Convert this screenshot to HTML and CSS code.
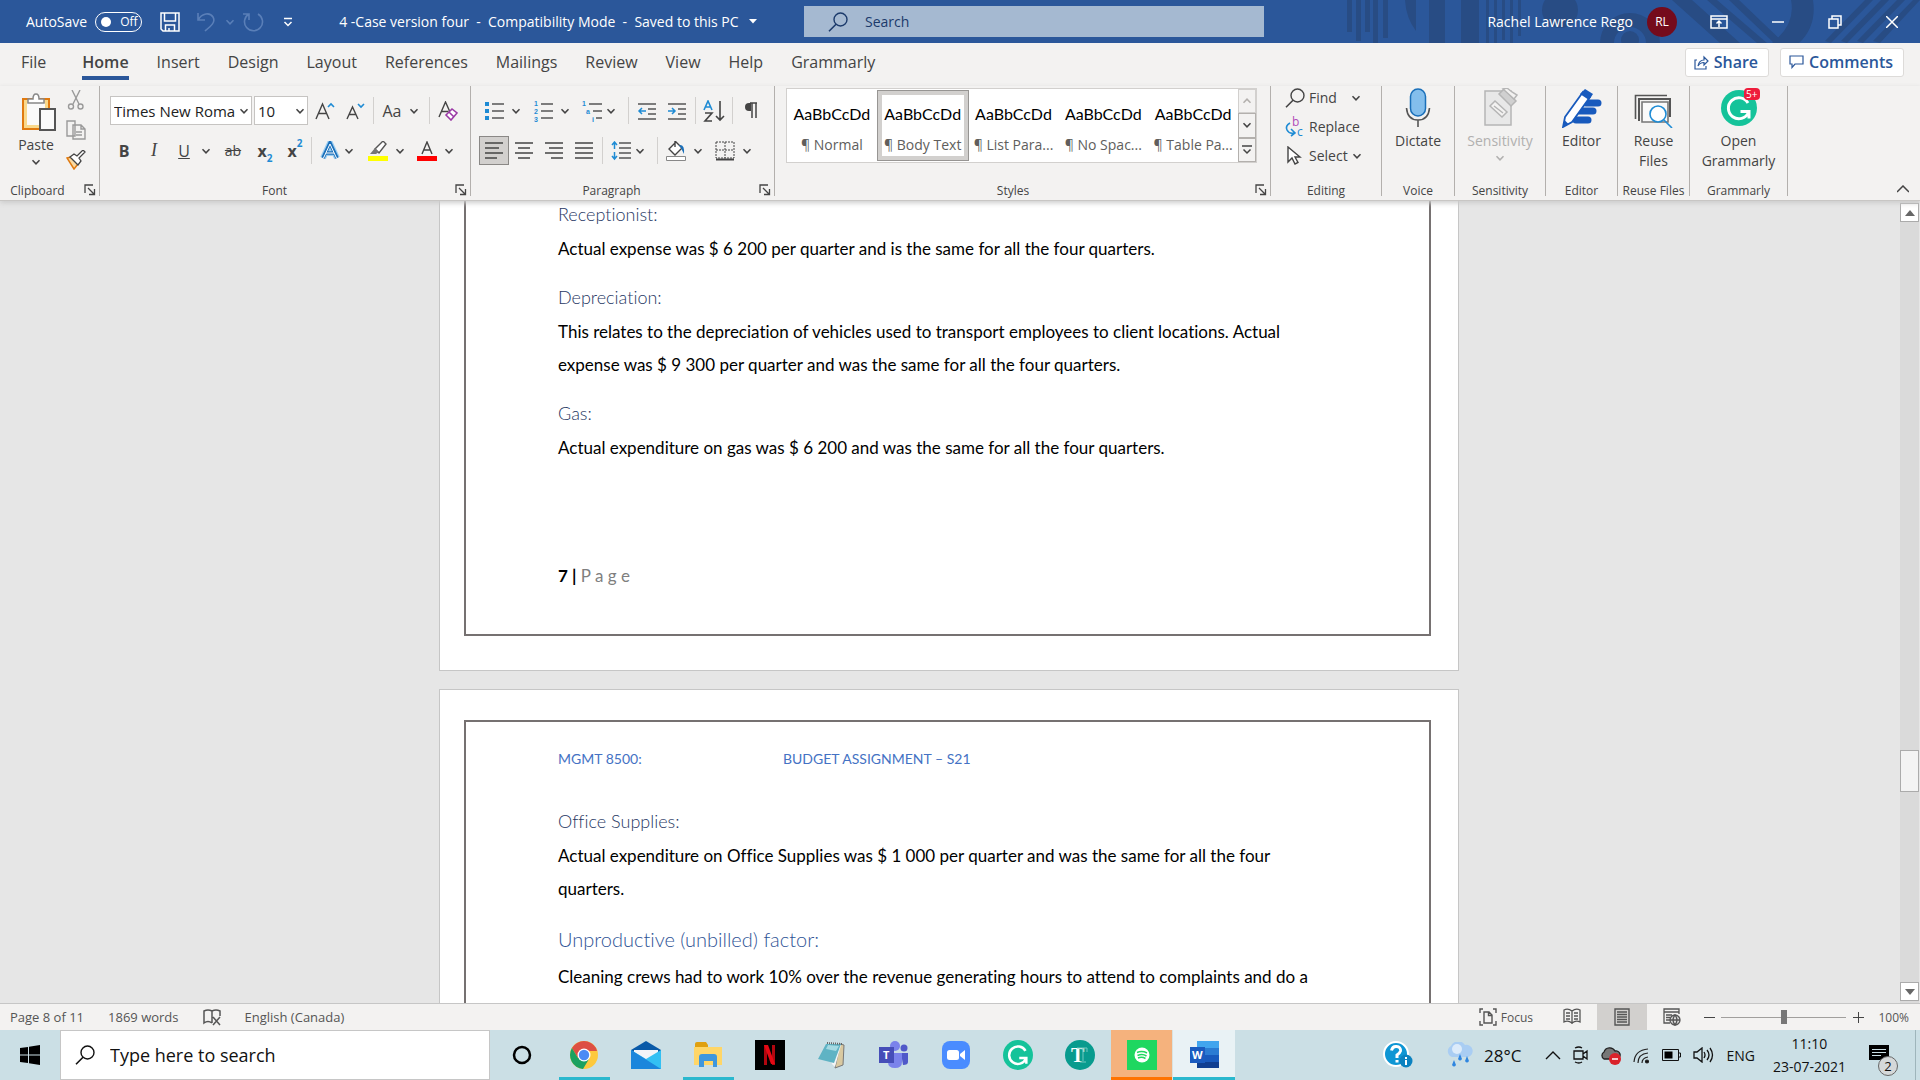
FILE: index.html
```html
<!DOCTYPE html>
<html lang="en">
  <head>
    <meta charset="UTF-8" />
    <meta name="viewport" content="width=device-width, initial-scale=1.0" />
    <title>4 -Case version four - Word</title>
    <link rel="stylesheet" href="styles.css">
  </head>
  <body>
    <!-- shared icons -->
    <svg class="sprite" aria-hidden="true">
      <symbol id="chev" viewBox="0 0 10 10"><path d="M1.5 3.2 5 6.8l3.5-3.6" fill="none" stroke="currentColor" stroke-width="1.5"/></symbol>
      <symbol id="launch" viewBox="0 0 12 12"><path d="M1 9V1h8M4 4l6 6M10.5 5v5.500H5" fill="none" stroke="currentColor" stroke-width="1.3"/></symbol>
      <symbol id="lens" viewBox="0 0 20 20"><circle cx="12.5" cy="7.5" r="6.5" fill="none" stroke="currentColor" stroke-width="1.4"/><path d="M8 12.200 1 19.300" stroke="currentColor" stroke-width="1.5"/></symbol>
      <symbol id="gram" viewBox="0 0 36 36"><circle cx="18" cy="18" r="18" fill="#15c39a"/><path d="M27 13a10.500 10.500 0 1 0 .5 9.500M19.500 21.500H28v7" fill="none" stroke="#fff" stroke-width="3"/></symbol>
    </svg>

    <header class="titlebar">
      <svg class="pattern" viewBox="0 0 573 43" aria-hidden="true">
        <g fill="#284c84">
          <path d="M0 0h5v32H0zM9 0h5v41H9zM18 0h5v32h-5zM26 0h5v43h-5zM36 0h5v38h-5zM58 0h11v31Q59 18 58 0zM82 0h16v43H82zM114 0h18v43h-18zM139 0h3v43h-3zM147 0h3v43h-3zM155 0h3v40h-3zM163 0h3v43h-3zM171 0h3v36h-3z"/>
          <circle cx="213" cy="10" r="18"/>
          <path d="M253 43a30 30 0 0 1 60 0h-14a16 16 0 0 0-32 0zM325 0h20l48 43h-20zM360 0h10l50 43h-10zM382 0h10l45 43h-10zM425 43q24-19 19-43h22q4 26-14 43zM478 41l40-41h8l-42 43zM494 41l40-41h8l-42 43zM510 41l40-41h8l-42 43zM526 41l40-41h7l-40 43z"/>
        </g>
        <circle cx="283" cy="40" r="9" fill="#284c84"/>
      </svg>
      <div class="title-left">
        <label class="autosave">AutoSave <input type="checkbox" role="switch" class="switch"><span class="switch-face"><i></i>Off</span></label>
        <button class="tb-btn" aria-label="Save"><svg width="20" height="20" fill="none" stroke="#fff" stroke-width="1.5"><path d="M1 1h18v18H3l-2-2zM4.500 1v8h11V1M5.500 19v-6h9v6M9 19v-3"/></svg></button>
        <button class="tb-btn faded" aria-label="Undo"><svg width="20" height="20" fill="none" stroke="currentColor" stroke-width="1.6"><path d="M2 1v7h7M2 8C6 1 14 0 17 5s-2 9-8 14"/></svg></button>
        <button class="tb-mini faded" aria-label="Undo list"><svg width="10" height="10"><use href="#chev"/></svg></button>
        <button class="tb-btn faded" aria-label="Redo"><svg width="22" height="20" fill="none" stroke="currentColor" stroke-width="1.6"><path d="M1 2h6v6M7 2a9 9 0 1 0 9 0"/></svg></button>
        <button class="tb-btn" aria-label="Customize Quick Access Toolbar"><svg width="10" height="10" fill="none" stroke="#fff" stroke-width="1.5"><path d="M1 1.500h8M1.500 5 5 8.500 8.500 5"/></svg></button>
        <span class="doc-title">4 -Case version four&nbsp; -&nbsp; Compatibility Mode&nbsp; -&nbsp; Saved to this PC <svg width="8" height="5"><path d="M0 0h8L4 4.500z" fill="#fff"/></svg></span>
      </div>
      <label class="title-search">
        <svg width="20" height="20"><use href="#lens"/></svg>
        <input type="search" placeholder="Search" aria-label="Search">
      </label>
      <div class="title-right">
        <span>Rachel Lawrence Rego</span>
        <span class="avatar">RL</span>
        <button class="win-btn first" aria-label="Ribbon display options"><svg width="18" height="14" fill="none" stroke="#fff" stroke-width="1.5"><path d="M1 1h16v12H1zM1 4h16M9 12V6M6.500 8.500 9 6l2.500 2.500"/></svg></button>
        <button class="win-btn" aria-label="Minimize"><svg width="12" height="12" stroke="#fff" stroke-width="1.5"><path d="M0 6h12"/></svg></button>
        <button class="win-btn" aria-label="Restore"><svg width="14" height="14" fill="none" stroke="#fff" stroke-width="1.5"><path d="M1 4h9v9H1zM4 4V1h9v9h-3"/></svg></button>
        <button class="win-btn" aria-label="Close"><svg width="12" height="12" stroke="#fff" stroke-width="1.5"><path d="m0 0 12 12M12 0 0 12"/></svg></button>
      </div>
    </header>

    <nav class="tabs">
      <a href="#" class="file">File</a>
      <a href="#" class="active">Home</a>
      <a href="#">Insert</a>
      <a href="#">Design</a>
      <a href="#">Layout</a>
      <a href="#">References</a>
      <a href="#">Mailings</a>
      <a href="#">Review</a>
      <a href="#">View</a>
      <a href="#">Help</a>
      <a href="#">Grammarly</a>
      <div class="tab-actions">
        <button class="pill"><svg width="15" height="15" fill="none" stroke="currentColor" stroke-width="1.2"><path d="M3 5H1v9h11v-3M4 11q1-6 6-6V2l4 4-4 4V7.500Q6 7.500 4 11z"/></svg>Share</button>
        <button class="pill"><svg width="15" height="14" fill="none" stroke="currentColor" stroke-width="1.2"><path d="M1 1h13v8H6l-3 3.500V9H1z"/></svg>Comments</button>
      </div>
    </nav>

    <section class="ribbon">
      <div class="group g-clip">
        <div class="clip">
          <button class="big">
            <svg width="36" height="40" viewBox="-2 0 36 40" overflow="visible"><path d="M3 7h26v30H3z" fill="#f9d98c" stroke="#e07a10" stroke-width="2"/><path d="M7 11h18v22H7z" fill="#fafafa"/><path d="M8 11V7h5q0-5 3-5t3 5h5v4z" fill="#fff" stroke="#888" stroke-width="1.5"/><path d="M20 17h15v21H20z" fill="#fafafa" stroke="#555" stroke-width="2"/></svg>
            Paste
            <svg width="10" height="10" class="under"><use href="#chev"/></svg>
          </button>
          <div class="clip-side">
            <button class="small" aria-label="Cut"><svg width="20" height="20" fill="none" stroke="#9a9a9a" stroke-width="1.4"><path d="m6 0 7 14M14 0 7 14"/><circle cx="5" cy="16.500" r="2.500"/><circle cx="14.500" cy="16.500" r="2.500"/></svg></button>
            <button class="small" aria-label="Copy"><svg width="20" height="20" fill="#f3f2f1" stroke="#9a9a9a" stroke-width="1.4"><path d="M1 1h8v15H1zM7 5h8l4 4v10H7zM15 5v4h4M10 12h6M10 15h6"/></svg></button>
            <button class="small" aria-label="Format Painter"><svg width="20" height="20"><path d="m1 8 4-1 7 7-4 5z" fill="#fad9a0" stroke="#e07a10" stroke-width="1.5"/><path d="m4 7 4-3 3 2 6-6 2 2-6 6 2 3-3 4z" fill="#fff" stroke="#444" stroke-width="1.3"/></svg></button>
          </div>
        </div>
        <div class="label">Clipboard<svg class="launch" width="12" height="12"><use href="#launch"/></svg></div>
      </div>

      <div class="group g-font">
        <div class="row">
          <span class="combo wide"><select aria-label="Font"><option>Times New Roman</option></select><svg width="10" height="10"><use href="#chev"/></svg></span>
          <span class="combo"><select aria-label="Font size"><option>10</option></select><svg width="10" height="10"><use href="#chev"/></svg></span>
          <button class="tool" aria-label="Increase font size"><svg width="20" height="20" fill="none" stroke="#444" stroke-width="1.4"><path d="M1 18 7.500 3 14 18M3.500 12.500h8"/><path d="m13 6 3-3 3 3" stroke="#1e8bd4" stroke-width="1.6"/></svg></button>
          <button class="tool" aria-label="Decrease font size"><svg width="20" height="20" fill="none" stroke="#444" stroke-width="1.4"><path d="M2 18 7.500 6 13 18M4 13.500h7"/><path d="m13 3 3 3 3-3" stroke="#1e8bd4" stroke-width="1.6"/></svg></button>
          <span class="sep"></span>
          <span class="pair"><button class="tool">Aa</button><button class="drop" aria-label="Change case"><svg width="10" height="10"><use href="#chev"/></svg></button></span>
          <span class="sep"></span>
          <button class="tool" aria-label="Clear formatting"><svg width="20" height="20" fill="none" stroke="#444" stroke-width="1.4"><path d="M1 16 7.500 1 12 11M3.500 10.500h7"/><path d="m8 14 6-6 5 4-6 7zM11 11l5 5" fill="#fff" stroke="#9b3aa6" stroke-width="1.6"/></svg></button>
        </div>
        <div class="row">
          <button class="tool bold">B</button>
          <button class="tool italic">I</button>
          <span class="pair"><button class="tool underline">U</button><button class="drop" aria-label="Underline style"><svg width="10" height="10"><use href="#chev"/></svg></button></span>
          <button class="tool strike">ab</button>
          <button class="tool bold script">x<sub>2</sub></button>
          <button class="tool bold script">x<sup>2</sup></button>
          <span class="sep"></span>
          <span class="pair tight"><button class="tool" aria-label="Text effects"><svg width="20" height="20" fill="none"><path d="M3 17 10 2l7 15M6 12h8" stroke="#9ccdf0" stroke-width="6"/><path d="M3 17 10 2l7 15M6 12h8" stroke="#1a6fb9" stroke-width="3.5"/><path d="M3.500 17 10 3l6.500 14M6 12h8" stroke="#fff" stroke-width="1"/></svg></button><button class="drop" aria-label="Text effects list"><svg width="10" height="10"><use href="#chev"/></svg></button></span>
          <span class="pair"><button class="tool" aria-label="Text highlight color"><svg width="20" height="20"><path d="M0 15h20v5H0z" fill="#ff0"/><path d="m7 8 8-8 3 3-7 9z" fill="#fff" stroke="#555" stroke-width="1.4"/><path d="M7 7 2 13h6l3-2z" fill="#777"/></svg></button><button class="drop" aria-label="Highlight list"><svg width="10" height="10"><use href="#chev"/></svg></button></span>
          <span class="pair"><button class="tool" aria-label="Font color"><svg width="20" height="20"><path d="M0 15h20v5H0z" fill="red"/><path d="M5 13 10 1l5 12M7 9h6" fill="none" stroke="#444" stroke-width="1.4"/></svg></button><button class="drop" aria-label="Font color list"><svg width="10" height="10"><use href="#chev"/></svg></button></span>
        </div>
        <div class="label">Font<svg class="launch" width="12" height="12"><use href="#launch"/></svg></div>
      </div>

      <div class="group g-para">
        <div class="row">
          <span class="pair"><button class="tool" aria-label="Bullets"><svg width="20" height="20"><path d="M1 1h4v4H1zM1 8h4v4H1zM1 15h4v4H1z" fill="#1e8bd4"/><path d="M8 3h12M8 10h12M8 17h12" stroke="#555" stroke-width="1.5"/></svg></button><button class="drop" aria-label="Bullet list"><svg width="10" height="10"><use href="#chev"/></svg></button></span>
          <span class="pair"><button class="tool" aria-label="Numbering"><svg width="20" height="22" class="ico-text"><text x="1" y="6">1</text><text x="1" y="14">2</text><text x="1" y="22">3</text><path d="M8 4h12M8 11h12M8 18h12" stroke="#555" stroke-width="1.5"/></svg></button><button class="drop" aria-label="Numbering list"><svg width="10" height="10"><use href="#chev"/></svg></button></span>
          <span class="pair tight"><button class="tool" aria-label="Multilevel list"><svg width="20" height="22" class="ico-text"><text x="0" y="6">1</text><text x="4" y="14">a</text><text x="10" y="22">i</text><path d="M7 4h13M11 11h9M14 18h6" stroke="#555" stroke-width="1.5"/></svg></button><button class="drop" aria-label="Multilevel styles"><svg width="10" height="10"><use href="#chev"/></svg></button></span>
          <span class="sep"></span>
          <button class="tool" aria-label="Decrease indent"><svg width="20" height="20" fill="none" stroke="#555" stroke-width="1.5"><path d="M1 3h18M11 8h8M11 13h8M1 18h18"/><path d="M9 10H2M5 7l-3 3 3 3" stroke="#1e8bd4"/></svg></button>
          <button class="tool" aria-label="Increase indent"><svg width="20" height="20" fill="none" stroke="#555" stroke-width="1.5"><path d="M1 3h18M11 8h8M11 13h8M1 18h18"/><path d="M1 10h7M5 7l3 3-3 3" stroke="#1e8bd4"/></svg></button>
          <span class="sep"></span>
          <button class="tool" aria-label="Sort"><svg width="22" height="22" fill="none" stroke="#444" stroke-width="1.6"><path d="m1 10 4-9 4 9M2.500 7h5" stroke="#1e8bd4"/><path d="M2 13h7l-7 8h7M17 1v19M13 16l4 4 4-4"/></svg></button>
          <span class="sep"></span>
          <button class="tool" aria-label="Show paragraph marks"><svg width="14" height="18"><path d="M6 1h7M8 1v15M12 1v15" stroke="#444" stroke-width="1.5"/><path d="M7 1H5a4 4 0 0 0 0 8h2z" fill="#444"/></svg></button>
        </div>
        <div class="row">
          <button class="tool on" aria-label="Align left"><svg width="18" height="20" stroke="#444" stroke-width="1.5"><path d="M0 2h18M0 7h14M0 12h18M0 17h12"/></svg></button>
          <button class="tool" aria-label="Center"><svg width="18" height="20" stroke="#444" stroke-width="1.5"><path d="M0 2h18M3 7h12M0 12h18M3 17h12"/></svg></button>
          <button class="tool" aria-label="Align right"><svg width="18" height="20" stroke="#444" stroke-width="1.5"><path d="M0 2h18M4 7h14M0 12h18M6 17h12"/></svg></button>
          <button class="tool" aria-label="Justify"><svg width="18" height="20" stroke="#444" stroke-width="1.5"><path d="M0 2h18M0 7h18M0 12h18M0 17h18"/></svg></button>
          <span class="sep"></span>
          <span class="pair tight"><button class="tool" aria-label="Line spacing"><svg width="20" height="20" fill="none" stroke="#555" stroke-width="1.5"><path d="M8 2h12M8 7h12M8 12h12M8 17h12"/><path d="M3.500 1v7M1 4l2.500-3L6 4M3.500 11v7M1 15l2.500 3L6 15" stroke="#1e8bd4"/></svg></button><button class="drop" aria-label="Spacing list"><svg width="10" height="10"><use href="#chev"/></svg></button></span>
          <span class="sep"></span>
          <span class="pair"><button class="tool" aria-label="Shading"><svg width="20" height="20"><path d="M3 8 10 1l6 6-7 7zM9 0v6" fill="#fff" stroke="#444" stroke-width="1.4"/><path d="M13 4q6-1 5 9l-3-6z" fill="#1a6fb9"/><path d="M.5 15.500h19v4H.5z" fill="#fff" stroke="#888"/></svg></button><button class="drop" aria-label="Shading colors"><svg width="10" height="10"><use href="#chev"/></svg></button></span>
          <span class="pair"><button class="tool" aria-label="Borders"><svg width="20" height="20" fill="none" stroke="#444"><path d="M1 1h18v16H1zM10 1v16M1 9h18" stroke-dasharray="2 1"/><path d="M1 18.500h18" stroke-width="2"/></svg></button><button class="drop" aria-label="Border list"><svg width="10" height="10"><use href="#chev"/></svg></button></span>
        </div>
        <div class="label">Paragraph<svg class="launch" width="12" height="12"><use href="#launch"/></svg></div>
      </div>

      <div class="group g-styles">
        <div class="gallery">
          <button class="style"><b>AaBbCcDd</b>¶ Normal</button>
          <button class="style chosen"><b>AaBbCcDd</b>¶ Body Text</button>
          <button class="style"><b>AaBbCcDd</b>¶ List Para...</button>
          <button class="style"><b>AaBbCcDd</b>¶ No Spac...</button>
          <button class="style"><b>AaBbCcDd</b>¶ Table Pa...</button>
          <div class="gallery-nav">
            <button aria-label="Previous styles" disabled><svg width="10" height="10" class="flip"><use href="#chev"/></svg></button>
            <button aria-label="Next styles"><svg width="10" height="10"><use href="#chev"/></svg></button>
            <button aria-label="More styles"><svg width="10" height="10" fill="none" stroke="currentColor" stroke-width="1.5"><path d="M0 1h10M1.500 4.500 5 8l3.500-3.500"/></svg></button>
          </div>
        </div>
        <div class="label">Styles<svg class="launch" width="12" height="12"><use href="#launch"/></svg></div>
      </div>

      <div class="group g-edit">
        <div class="edit-list">
          <button><svg width="20" height="20"><use href="#lens"/></svg>Find<svg width="10" height="10" class="far"><use href="#chev"/></svg></button>
          <button><svg width="20" height="20" class="ico-replace"><text x="7" y="9" fill="#b14bb8">b</text><text x="12" y="19" fill="#1e8bd4">c</text><path d="M5 6Q0 9 2 13t7 3M6 12l4 4-4 3" fill="none" stroke="#1e8bd4" stroke-width="1.6"/></svg>Replace</button>
          <button><svg width="20" height="20"><path d="M3 1v15l4-4 3 6 3-1.500-3-5.500h5z" fill="#fff" stroke="#444" stroke-width="1.4"/></svg>Select<svg width="10" height="10"><use href="#chev"/></svg></button>
        </div>
        <div class="label">Editing</div>
      </div>

      <div class="group g-voice">
        <button class="big"><svg width="26" height="40"><rect x="5.500" y="1" width="15" height="27" rx="7.500" fill="#83beec" stroke="#1a6fb9" stroke-width="1.5"/><path d="M1.500 20q1 12 11.500 12t11.500-12M13 32v7" fill="none" stroke="#555" stroke-width="1.6"/></svg>Dictate</button>
        <div class="label">Voice</div>
      </div>
      <div class="group g-sens">
        <button class="big" disabled><svg width="36" height="40" fill="#e8e8e8" stroke="#b5b5b5" stroke-width="1.5"><path d="M3 3h26v34H3z"/><path d="m8 18 5-5 12 11-5 5zM12 18l9 7" fill="#f3f2f1"/><path d="m17 6 5-5 12 12-5 5z" fill="#d0d0d0"/><path d="m21 1 4-1 5 4 5 3-3 4z" fill="#f3f2f1"/></svg>Sensitivity<svg width="10" height="10" class="under"><use href="#chev"/></svg></button>
        <div class="label">Sensitivity</div>
      </div>
      <div class="group g-editor">
        <button class="big"><svg width="40" height="40" fill="none"><path d="M24 15h12M17 23h14M14 32h12" stroke="#185abd" stroke-width="7" stroke-linecap="round"/><path d="m3 29 18-25 7 5-18 25-9 5z" fill="#fff" stroke="#185abd" stroke-width="1.8"/><path d="m18 6 5-5 8 5-4 6z" fill="#185abd"/><path d="m1 39 1.500-7 4 4z" fill="#185abd"/></svg>Editor</button>
        <div class="label">Editor</div>
      </div>
      <div class="group g-reuse">
        <button class="big"><svg width="40" height="40" fill="none"><path d="M1.500 31V7.500H33" stroke="#555" stroke-width="1.6"/><path d="M5 33V11h31v18" stroke="#555" stroke-width="2"/><path d="M8 14h26v20H8z" fill="#fafafa" stroke="#777" stroke-width="1.6"/><circle cx="24" cy="26" r="8" fill="#fff" stroke="#1e8bd4" stroke-width="1.6"/><path d="m30 32 8 8" stroke="#1e8bd4" stroke-width="1.6"/></svg>Reuse<br>Files</button>
        <div class="label">Reuse Files</div>
      </div>
      <div class="group g-gram">
        <button class="big"><span class="gram-ico"><svg width="36" height="40" viewBox="0 -2 36 40"><use href="#gram" width="36" height="36"/></svg><i>5+</i></span>Open<br>Grammarly</button>
        <div class="label">Grammarly</div>
      </div>
      <button class="collapse" aria-label="Collapse the Ribbon"><svg width="12" height="8" fill="none" stroke="#444" stroke-width="1.5"><path d="m0 7 6-6 6 6"/></svg></button>
    </section>

    <main class="workspace">
      <div class="canvas">
        <article class="page page-seven">
          <div class="frame">
            <h3>Receptionist:</h3>
            <p>Actual expense was $ 6 200 per quarter and is the same for all the four quarters.</p>
            <h3>Depreciation:</h3>
            <p>This relates to the depreciation of vehicles used to transport employees to client locations. Actual<br>expense was $ 9 300 per quarter and was the same for all the four quarters.</p>
            <h3>Gas:</h3>
            <p>Actual expenditure on gas was $ 6 200 and was the same for all the four quarters.</p>
            <footer class="page-foot"><b>7 |</b> P a g e</footer>
          </div>
        </article>
        <article class="page page-eight">
          <div class="frame">
            <header class="page-head"><span>MGMT 8500:</span><span>BUDGET ASSIGNMENT – S21</span></header>
            <h3>Office Supplies:</h3>
            <p>Actual expenditure on Office Supplies was $ 1 000 per quarter and was the same for all the four<br>quarters.</p>
            <h2>Unproductive (unbilled) factor:</h2>
            <p>Cleaning crews had to work 10% over the revenue generating hours to attend to complaints and do a</p>
          </div>
        </article>
      </div>
      <div class="scroll">
        <button aria-label="Scroll up"><svg width="10" height="6"><path d="M0 6h10L5 0z" fill="#666"/></svg></button>
        <div class="track"><div class="thumb"></div></div>
        <button aria-label="Scroll down"><svg width="10" height="6"><path d="M0 0h10L5 6z" fill="#666"/></svg></button>
      </div>
    </main>

    <div class="status">
      <span>Page 8 of 11</span>
      <span>1869 words</span>
      <svg width="18" height="17" fill="none" stroke="#555" stroke-width="1.5"><path d="M9 14q-4-3-8 0V2q4-2 8 0 4-2 8 0v5M9 2v12M10 8l7 8M17 8l-7 8"/></svg>
      <span>English (Canada)</span>
      <div class="status-right">
        <button class="focus"><svg width="18" height="18" fill="none" stroke="#555" stroke-width="1.4"><path d="M4 1H1v4M14 1h3v4M4 17H1v-4M14 17h3v-4M5 4h5l3 3v8H5zM9.500 4v3.500H13"/></svg>Focus</button>
        <button class="view" aria-label="Read mode"><svg width="18" height="18" fill="none" stroke="#555" stroke-width="1.3"><path d="M9 3Q5 0 1 2v12q4-2 8 1 4-3 8-1V2q-4-2-8 1zM9 3v13M3 5h4M3 8h4M3 11h4M11 5h4M11 8h4M11 11h4"/></svg></button>
        <button class="view on" aria-label="Print layout"><svg width="16" height="18" fill="none" stroke="#555" stroke-width="1.4"><path d="M1 1h14v16H1zM3 4h10M3 6.500h10M3 9h10M3 11.500h10M3 14h10"/></svg></button>
        <button class="view" aria-label="Web layout"><svg width="18" height="18" fill="none" stroke="#555" stroke-width="1.3"><path d="M7 15H1V1h15v5M1 4h15M3 7h6M3 9.500h4M3 12h4"/><circle cx="12" cy="12" r="5" fill="#ddd"/><path d="M7 12h10M12 7q-4 5 0 10 4-5 0-10z"/></svg></button>
        <button class="zoom-btn" aria-label="Zoom out"><svg width="11" height="11" stroke="#444"><path d="M0 5.500h11"/></svg></button>
        <input type="range" class="zoom-bar" min="10" max="190" value="100" aria-label="Zoom">
        <button class="zoom-btn" aria-label="Zoom in"><svg width="11" height="11" stroke="#444"><path d="M0 5.500h11M5.500 0v11"/></svg></button>
        <span class="percent">100%</span>
      </div>
    </div>

    <div class="taskbar">
      <button class="start" aria-label="Start"><svg width="20" height="20"><path d="M0 3 8 2v7.500H0zM9 1.800 20 0v9.500H9zM0 10.500h8V18l-8-1zM9 10.500h11V20L9 18.300z"/></svg></button>
      <label class="task-search"><svg width="20" height="20"><use href="#lens"/></svg><input type="search" placeholder="Type here to search" aria-label="Type here to search"></label>
      <div class="apps">
        <button class="app" aria-label="Cortana"><svg width="20" height="20"><circle cx="10" cy="10" r="8" fill="none" stroke="#000" stroke-width="2.5"/></svg></button>
        <button class="app open" aria-label="Chrome"><svg width="28" height="28" viewBox="0 0 28 28"><circle cx="14" cy="14" r="14" fill="#fdc93d"/><path d="M1.900 7A14 14 0 0 1 26.100 7L27 10H14L8 17z" fill="#dd4f43"/><path d="M1.900 7A14 14 0 0 0 13 28l6-10-5-4-6 3z" fill="#1ba160"/><circle cx="14" cy="14" r="6.500" fill="#fff"/><circle cx="14" cy="14" r="5.200" fill="#4c8bf5"/></svg></button>
        <button class="app" aria-label="Mail"><svg width="30" height="28"><path d="M0 9 15 0l15 9v4H0z" fill="#0a5aa8"/><path d="M3 9h24v9H3z" fill="#f2f4f8"/><path d="M0 9v19h30V9L15 18z" fill="#33c0f3"/><path d="m0 9 30 19H0z" fill="#1b86dc"/></svg></button>
        <button class="app open" aria-label="File Explorer"><svg width="28" height="26"><path d="M1 2q0-2 2-2h9l2 3v4H1z" fill="#e0a00f"/><path d="M0 5h28v18H0z" fill="#ffd667"/><path d="M5 25V15q0-3 3-3h12q3 0 3 3v10h-4v-6h-9v6z" fill="#3e97dd"/></svg></button>
        <button class="app" aria-label="Netflix"><svg width="30" height="30"><path d="M0 0h30v30H0z"/><path d="M9 5h3v20H9zM17 5h3v20h-3z" fill="#b1060f"/><path d="M9 5h4l7 19h-4z" fill="#e50914"/></svg></button>
        <button class="app" aria-label="Notepad"><svg width="30" height="28"><path d="m23 3 4 1-1 20-8 3z" fill="#d9c9a0" stroke="#777"/><path d="m9 3 15 1-6 22-3-3z" fill="#f5f5f5"/><path d="M9 3h15l-7 19L1 18z" fill="#5fb3c4"/><path d="m11 4 11 1-3 5-10-2z" fill="#a5dae3"/><path d="m10 2 15 1" stroke="#666" stroke-width="2" stroke-dasharray="1 1"/></svg></button>
        <button class="app" aria-label="Teams"><svg width="30" height="28"><circle cx="16" cy="5" r="5" fill="#7b83eb"/><circle cx="25" cy="7" r="3.500" fill="#5059c9"/><path d="M22 12h7v9q0 3-5 3z" fill="#5059c9"/><path d="M9 12h14v9q0 6-7 6t-7-6z" fill="#7b83eb"/><path d="M0 6h15v16H0z" fill="#464eb8"/><text x="4" y="18" class="logo-letter">T</text></svg></button>
        <button class="app" aria-label="Zoom"><svg width="28" height="28"><rect width="28" height="28" rx="8" fill="#4a8cff"/><rect x="5" y="9" width="12" height="10" rx="2.500" fill="#fff"/><path d="m18 13 5-4v10l-5-4z" fill="#fff"/></svg></button>
        <button class="app" aria-label="Grammarly"><svg width="30" height="30"><use href="#gram"/></svg></button>
        <button class="app" aria-label="Textbook"><svg width="30" height="30"><circle cx="15" cy="15" r="15" fill="#089b8e"/><text x="6" y="22" class="serif-letter">T</text><path d="M12 8h10v4M18 8v13M15 22h6" fill="none" stroke="#71c9c0"/></svg></button>
        <button class="app spotify" aria-label="Spotify"><svg width="30" height="30"><path d="M0 0h30v30H0z" fill="#1ed760"/><circle cx="15" cy="15" r="7.500" fill="#fff"/><path d="M10 12.500q5-2 10 .5M10.500 15.500q5-2 9 .5M11 18q4-1.500 7.500.5" fill="none" stroke="#1ed760" stroke-width="1.5"/></svg></button>
        <button class="app current" aria-label="Word"><svg width="29" height="28"><path d="M7 0h22v7H7z" fill="#41a5ee"/><path d="M7 7h22v7H7z" fill="#2b7cd3"/><path d="M7 14h22v7H7z" fill="#185abd"/><path d="M7 21h22v6H7z" fill="#103f91"/><path d="M0 6h15v16H0z" fill="#1a5bbf"/><text x="2" y="18" class="logo-letter">W</text></svg></button>
      </div>
      <div class="tray">
        <button class="help" aria-label="Help"><svg width="30" height="28"><circle cx="13" cy="13" r="12" fill="#0e96d4" stroke="#fff" stroke-width="2"/><path d="M8.500 9.500q1-4.500 5-4 4.500.5 4 4.500-.5 2-3.500 4v3M14 19v2.500" fill="none" stroke="#fff" stroke-width="3"/><circle cx="23" cy="20" r="6.500" fill="#0b82c0"/><path d="M23 16v2M23 19v5" stroke="#fff" stroke-width="2"/></svg></button>
        <button class="weather"><svg width="27" height="26"><path d="M6 15a6 6 0 0 1-1-11 8 8 0 0 1 14-1 6 6 0 0 1 3 12z" fill="#a9cdf3"/><circle cx="11" cy="7" r="5" fill="#dcebfa"/><path d="m14 12-2 5q2 3 4 0zM8 18l-2 5q2 3 4 0zM21 14l-2 5q2 3 4 0z" fill="#2f86e0"/></svg>28°C</button>
        <svg width="16" height="9" fill="none" stroke="#111" stroke-width="1.4"><path d="m1 8 7-7 7 7"/></svg>
        <svg width="15" height="18" fill="none" stroke="#111" stroke-width="1.3"><path d="M1 5h9v8H1zM10 8l4-3v8l-4-3M2 2q4-2 7 0M2 16q4 2 7 0"/></svg>
        <svg width="21" height="19"><path d="M4 13a4 4 0 0 1 0-7 6 6 0 0 1 11-1 4 4 0 0 1 2 8z" fill="#777" stroke="#222" stroke-width="1.3"/><circle cx="15" cy="13" r="6" fill="#d9222a"/><path d="M12 13h6" stroke="#fff" stroke-width="1.5"/></svg>
        <svg width="17" height="17" fill="none" stroke="#222" stroke-width="1.2"><path d="M1 15Q2 3 15 2M5 16Q5 7 15 6M9 16q0-5 6-6"/><circle cx="14" cy="14.500" r="1.500" fill="#111"/></svg>
        <svg width="19" height="12"><path d="M.5.5h16v11H.5zM17 4h1.500v4H17" fill="none" stroke="#111"/><path d="M2.500 2.500h8v7h-8z"/></svg>
        <svg width="21" height="16" fill="none" stroke="#111" stroke-width="1.3"><path d="M1 5h3l5-4v14l-5-4H1zM11 5q2 3 0 6M14 3q4 5 0 10M17 1q5 7 0 14"/></svg>
        <span class="lang">ENG</span>
        <time class="clock">11:10<br>23-07-2021</time>
        <button class="notice" aria-label="Notifications"><svg width="20" height="20"><path d="M0 0h20v15h-4v4l-4-4H0z"/><path d="M3 4.500h14M3 7.500h14M3 10.500h9" stroke="#cbdfe5"/></svg><i>2</i></button>
      </div>
    </div>
  </body>
</html>
```
FILE: styles.css
```css
*,
*::after,
*::before {
  margin: 0;
  padding: 0;
  box-sizing: border-box;
}

body {
  display: flex;
  flex-direction: column;
  height: 100vh;
  overflow: hidden;
  font-family: "Open Sans", "Noto Sans", sans-serif;
  font-size: 14px;
  color: #444;
  background: #e6e6e6;
}

button,
input,
select {
  font: inherit;
  color: inherit;
  border: 0;
  background: none;
  outline: none;
}

button {
  display: flex;
  align-items: center;
  justify-content: center;
  white-space: nowrap;
}

svg {
  flex: none;
}

i {
  font-style: normal;
}

.sprite {
  display: none;
}

/* title bar */
.titlebar {
  position: relative;
  display: grid;
  grid-template-columns: 804fr 460fr 656fr;
  align-items: center;
  height: 43px;
  color: #fff;
  background: #2b579a;
}

.pattern {
  position: absolute;
  right: 0;
  top: 0;
  width: 573px;
  height: 43px;
}

.title-left {
  display: flex;
  align-items: center;
  padding-left: 26px;
  white-space: nowrap;
}

.autosave {
  display: flex;
  align-items: center;
  gap: 8px;
  margin-right: 10px;
}

.switch {
  position: absolute;
  opacity: 0;
}

.switch-face {
  display: flex;
  align-items: center;
  gap: 9px;
  width: 47px;
  height: 20px;
  padding-left: 5px;
  border: 1px solid #fff;
  border-radius: 10px;
  font-size: 12px;
  line-height: 18px;
}

.switch-face i {
  width: 10px;
  height: 10px;
  border-radius: 50%;
  background: #fff;
}

.tb-btn {
  width: 36px;
  height: 30px;
}

.tb-mini {
  width: 12px;
}

.faded {
  color: #5a7fb8;
}

.tb-mini + .tb-btn {
  width: 34px;
}

.doc-title {
  display: flex;
  align-items: center;
  gap: 10px;
  margin-left: 33px;
}

.title-search {
  display: flex;
  align-items: center;
  gap: 17px;
  height: 31px;
  padding-left: 24px;
  color: #1b3a6b;
  background: #a5b9d1;
}

input::placeholder {
  color: inherit;
  opacity: 1;
}

.title-right {
  position: relative;
  display: flex;
  align-items: center;
  justify-content: flex-end;
}

.avatar {
  width: 30px;
  height: 30px;
  margin: 0 13px 0 14px;
  border-radius: 50%;
  background: #750b1c;
  font-size: 12px;
  line-height: 30px;
  text-align: center;
}

.win-btn {
  width: 57px;
  height: 43px;
}

.win-btn.first {
  margin-right: 2px;
}

/* tabs */
.tabs {
  display: flex;
  align-items: center;
  gap: 28px;
  height: 43px;
  padding: 0 16px 0 21px;
  background: #f3f2f1;
  font-size: 16px;
}

.tabs a {
  padding-bottom: 2px;
  color: #444;
  line-height: 24px;
  text-decoration: none;
  border-bottom: 4px solid transparent;
}

.tabs .file {
  margin-right: 8px;
}

.tabs .active {
  font-weight: 600;
  border-color: #2b579a;
}

.tab-actions {
  display: flex;
  gap: 11px;
  margin: 0 0 5px auto;
}

.pill {
  gap: 5px;
  height: 29px;
  padding: 0 10px 0 8px;
  border: 1px solid #dddbd9;
  border-radius: 3px;
  background: #fff;
  color: #2b579a;
  font-size: 16px;
  font-weight: 600;
}

/* ribbon */
.ribbon {
  position: relative;
  z-index: 1;
  display: flex;
  padding-bottom: 4px;
  background: #f3f2f1;
  border-bottom: 1px solid #c8c6c4;
  box-shadow: 0 2px 5px #ccc;
}

.group {
  display: flex;
  flex-direction: column;
  height: 110px;
  border-right: 1px solid #b3b0ad;
}

.label {
  position: relative;
  margin-top: auto;
  font-size: 12px;
  line-height: 11px;
  text-align: center;
  white-space: nowrap;
}

.launch {
  position: absolute;
  right: 3px;
  bottom: 0;
}

.g-clip { width: 100px; }
.g-font { width: 371px; padding: 10px 0 0 9px; }
.g-para { width: 304px; padding: 10px 0 0 8px; }
.g-styles { width: 496px; padding: 2px 0 0 11px; }
.g-edit { width: 111px; }
.g-voice { width: 73px; }
.g-sens { width: 91px; }
.g-editor { width: 72px; }
.g-reuse { width: 72px; }
.g-gram { width: 98px; }

.g-clip .label {
  padding-right: 24px;
}

.g-font .label,
.g-para .label,
.g-styles .label {
  padding-right: 30px;
}

.big {
  flex-direction: column;
  align-self: center;
  padding-top: 2px;
  line-height: 20px;
}

.big svg:first-child {
  margin-bottom: 3px;
}

.big .under {
  margin-top: 2px;
}

.big:disabled {
  color: #b1b0af;
}

.clip {
  display: flex;
  gap: 12px;
  padding-left: 18px;
}

.clip-side {
  display: flex;
  flex-direction: column;
  gap: 10px;
  padding-top: 4px;
}

.row {
  display: flex;
  align-items: center;
  height: 29px;
  margin-bottom: 11px;
}

.g-font .row:first-child {
  padding-left: 1px;
}

.combo {
  position: relative;
  width: 54px;
  height: 29px;
  margin-right: 2px;
  border: 1px solid #c6c4c2;
  background: #fff;
  font-size: 15px;
}

.combo.wide {
  width: 142px;
}

.combo select {
  appearance: none;
  width: 100%;
  height: 100%;
  padding: 0 16px 0 3px;
  color: #222;
}

.combo svg {
  position: absolute;
  right: 2px;
  top: 9px;
}

.tool {
  width: 30px;
  height: 29px;
  font-size: 16px;
}

.tool.on {
  border: 1px solid #8a8886;
  background: #d2d0ce;
}

.drop {
  width: 14px;
  height: 29px;
}

.pair {
  display: flex;
  margin-right: 5px;
}

.pair.tight {
  padding-left: 3px;
  margin-right: 7px;
}

.tight .tool {
  width: 24px;
}

.sep {
  width: 1px;
  height: 27px;
  margin: 0 3px;
  background: #d2d0ce;
}

.bold {
  font-weight: 700;
}

.italic {
  font-family: "Liberation Serif", serif;
  font-size: 18px;
  font-style: italic;
}

.underline {
  text-decoration: underline;
}

.strike {
  font-size: 14px;
  text-decoration: line-through;
}

.script {
  padding-left: 4px;
}

.tool sub,
.tool sup {
  color: #1e8bd4;
  font-size: 10px;
}

.tool sub {
  align-self: flex-end;
}

.tool sup {
  align-self: flex-start;
}

.ico-text {
  overflow: visible;
}

.ico-text text {
  fill: #1e8bd4;
  font-family: "Liberation Sans", sans-serif;
  font-size: 7px;
  font-weight: 700;
}

.ico-replace {
  overflow: visible;
}

.ico-replace text {
  font-size: 12px;
}

.gallery {
  display: flex;
  width: 471px;
  height: 75px;
  border: 1px solid #d2d0ce;
  background: #fff;
}

.style {
  flex: 1;
  flex-direction: column;
  gap: 11px;
  padding-top: 8px;
  color: #605e5c;
  font-size: 14px;
  line-height: 20px;
}

.style b {
  color: #000;
  font-family: Lato, sans-serif;
  font-size: 16px;
  font-weight: 400;
}

.style.chosen {
  margin: 1px 0;
  border: 1px solid #979593;
  box-shadow: inset 0 0 0 4px #d2d0ce;
}

.gallery-nav {
  display: grid;
  width: 18px;
  background: #f3f2f1;
}

.gallery-nav button {
  border: 1px solid #b3b0ad;
}

.gallery-nav button:disabled {
  color: #b3b0ad;
  border-color: #d2d0ce;
}

.flip {
  transform: rotate(180deg);
}

.edit-list {
  display: flex;
  flex-direction: column;
  align-items: flex-start;
  gap: 9px;
  padding: 2px 0 0 14px;
}

.edit-list button {
  gap: 4px;
  line-height: 20px;
}

.edit-list .far {
  margin-left: 10px;
}

.gram-ico {
  position: relative;
  height: 43px;
}

.gram-ico i {
  position: absolute;
  top: 0;
  right: -3px;
  padding: 0 2px;
  border-radius: 4px;
  background: #ee1c3b;
  color: #fff;
  font-size: 10px;
  line-height: 12px;
}

.collapse {
  align-self: flex-end;
  width: 34px;
  height: 14px;
  margin-left: auto;
}

/* document */
.workspace {
  display: flex;
  flex: 1;
  min-height: 0;
  padding-right: 1px;
  overflow: hidden;
}

.canvas {
  display: flex;
  flex: 1;
  flex-direction: column;
  align-items: center;
  gap: 18px;
  padding-right: 2px;
  overflow: hidden;
}

.page {
  flex: none;
  width: 1020px;
  padding: 0 27px 0 24px;
  border: 1px solid #c6c6c6;
  background: #fff;
  color: #000;
  font-family: Lato, sans-serif;
  font-size: 17px;
  font-variant-ligatures: no-common-ligatures;
}

.page-seven {
  padding-bottom: 34px;
  border-top: 0;
}

.page-eight {
  padding-top: 30px;
}

.frame {
  padding: 1px 60px 46px 92px;
  border: 2px solid #767171;
}

.page-seven .frame {
  border-top: 0;
}

.page-eight .frame {
  padding-top: 25px;
}

.page p {
  line-height: 33px;
  white-space: nowrap;
}

.page h3 {
  margin: 20px 0 6px;
  color: #1f3763;
  font-size: 18px;
  font-weight: 300;
  line-height: 24px;
}

.page h3:first-child {
  margin-top: 0;
}

.page h2 {
  margin: 19px 0 6px;
  color: #2f5496;
  font-size: 20px;
  font-weight: 300;
  line-height: 30px;
}

.page-foot {
  margin-top: 100px;
  color: #7f7f7f;
  line-height: 24px;
}

.page-foot b {
  color: #000;
}

.page-head {
  display: grid;
  grid-template-columns: 225px 1fr;
  margin-bottom: 38px;
  color: #4472c4;
  font-size: 14px;
  line-height: 24px;
}

.scroll {
  display: flex;
  flex-direction: column;
  width: 19px;
  padding: 2px 0;
  background: #dadada;
}

.scroll button,
.thumb {
  height: 19px;
  border: 1px solid #ababab;
  background: #fff;
}

.track {
  display: grid;
  flex: 1;
  grid-template-rows: 528fr 42fr 190fr;
}

.thumb {
  grid-row: 2;
  height: auto;
  background: #f3f3f3;
}

/* status bar */
.status {
  display: flex;
  align-items: center;
  gap: 24px;
  height: 27px;
  padding: 0 11px 0 10px;
  border-top: 1px solid #c6c6c6;
  background: #f3f2f1;
  color: #555;
  font-size: 13px;
}

.status-right {
  display: flex;
  align-items: center;
  align-self: stretch;
  margin-left: auto;
  font-size: 12px;
}

.focus {
  gap: 4px;
  margin-right: 14px;
}

.view {
  align-self: stretch;
  width: 50px;
}

.view.on {
  background: #d2d0ce;
}

.zoom-btn {
  width: 24px;
}

.zoom-bar {
  appearance: none;
  width: 125px;
  height: 20px;
}

.zoom-bar::-webkit-slider-runnable-track {
  height: 1px;
  background: #a19f9d;
}

.zoom-bar::-webkit-slider-thumb {
  appearance: none;
  width: 6px;
  height: 14px;
  margin-top: -7px;
  background: #777;
}

.percent {
  min-width: 39px;
  text-align: right;
}

/* taskbar */
.taskbar {
  display: flex;
  height: 50px;
  background: #cbdfe5;
  color: #111;
}

.start {
  width: 60px;
}

.task-search {
  display: flex;
  align-items: center;
  gap: 15px;
  width: 430px;
  padding-left: 14px;
  border: 1px solid #c6c6c6;
  background: #fff;
  font-size: 18px;
}

.task-search input {
  width: 300px;
}

.apps {
  display: flex;
  margin-left: 1px;
}

.app {
  position: relative;
  width: 62px;
}

.app::after {
  position: absolute;
  bottom: 0;
  width: 51px;
  height: 3px;
}

.open::after,
.current::after {
  content: "";
  background: #2bb8ce;
}

.current {
  background: #e9f2f5;
}

.spotify {
  background: #f5b27d;
  border-right: 1px solid #d9e3e0;
}

.spotify::after {
  content: "";
  background: #ff7300;
}

.current::after,
.spotify::after {
  width: 100%;
}

.logo-letter {
  fill: #fff;
  font-size: 11px;
  font-weight: 700;
}

.serif-letter {
  fill: #fff;
  font-family: "Liberation Serif", serif;
  font-size: 20px;
  font-weight: 700;
}

.tray {
  display: flex;
  align-items: center;
  gap: 12px;
  margin-left: auto;
  padding-right: 4px;
  font-size: 14px;
}

.help {
  margin-right: 21px;
}

.weather {
  gap: 11px;
  margin-right: 12px;
  font-size: 17px;
}

.lang {
  margin-right: 6px;
}

.clock {
  margin-right: 11px;
  line-height: 23px;
  text-align: center;
}

.notice {
  position: relative;
  justify-content: flex-start;
  width: 47px;
  height: 50px;
  border-right: 1px solid #9fb5bb;
}

.notice i {
  position: absolute;
  left: 9px;
  bottom: 4px;
  width: 20px;
  height: 20px;
  border: 1px solid #666;
  border-radius: 50%;
  background: #d5d8d9;
  font-size: 13px;
  line-height: 18px;
}
```
